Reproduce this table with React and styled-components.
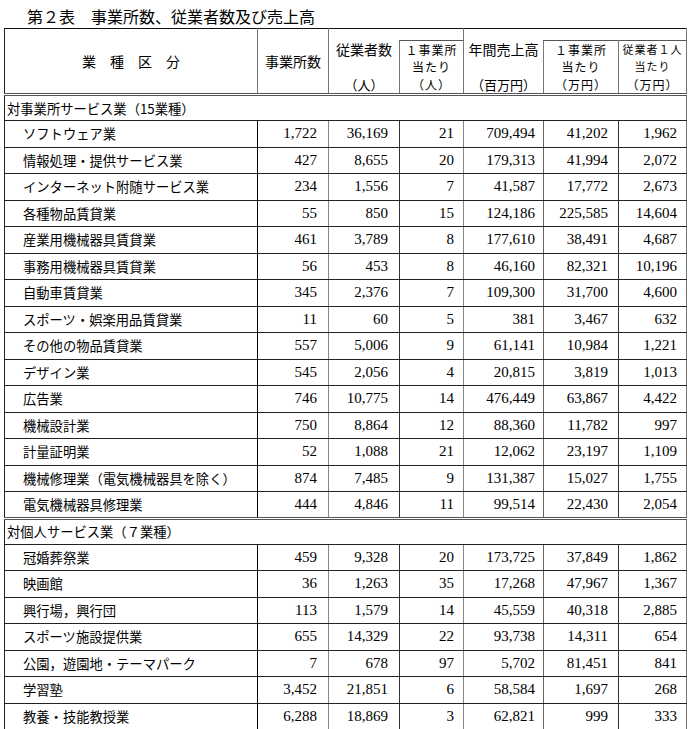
import styled, { createGlobalStyle } from "styled-components";

const GlobalStyle = createGlobalStyle`
  html, body {
    margin: 0;
    padding: 0;
    background: #ffffff;
  }
  body {
    font-family: "Noto Sans CJK JP", "Noto Sans", sans-serif;
    color: #000;
  }
`;

const Page = styled.div`
  width: 688px;
  padding-left: 4px;
  box-sizing: border-box;
`;

const Title = styled.h1`
  margin: 0;
  height: 28px;
  padding: 4px 0 0 23px;
  box-sizing: border-box;
  font-size: 16px;
  line-height: 24px;
  font-weight: 400;
  white-space: pre;
`;

const Table = styled.table`
  width: 682px;
  table-layout: fixed;
  border-collapse: collapse;
  border-top: 1px solid #111;
  border-left: 1px solid #222;
  border-right: 1px solid #777;
  border-bottom: 1px solid #222;
`;

const HeadRow = styled.tr`
  height: ${(p) => p.$h}px;
`;

const Th = styled.th`
  padding: 0;
  font-weight: 400;
  font-size: 14px;
  line-height: 17px;
  text-align: center;
  vertical-align: ${(p) => (p.$bottom ? "bottom" : "middle")};
  white-space: nowrap;
  overflow: hidden;
  border-left: 1px solid ${(p) => p.$left || "#777"};
  border-top: ${(p) => (p.$sub ? "1px solid #555" : "none")};
  border-right: ${(p) => (p.$openRight ? "none" : "1px solid #777")};
  border-bottom: 3px double #555;
`;

const GapCell = styled.th`
  padding: 0;
  border-left: none;
  border-top: none;
  border-right: 1px solid #777;
  border-bottom: none;
`;

const Line = styled.span`
  display: block;
  height: 17.4px;
  line-height: 17.4px;
  font-size: ${(p) => p.$size}px;
  letter-spacing: ${(p) => p.$track}px;
`;

const CategoryRow = styled.tr`
  height: 26px;
`;

const CategoryCell = styled.td`
  padding: 0 0 0 2px;
  font-size: 13.3px;
  text-align: left;
  vertical-align: middle;
  white-space: nowrap;
  border-bottom: 1px solid #222;
  border-top: ${(p) => (p.$double ? "3px double #555" : "none")};
`;

const DataRow = styled.tr`
  height: 26.5px;
`;

const LabelCell = styled.td`
  padding: 0 0 0 18px;
  font-size: 13.3px;
  white-space: nowrap;
  overflow: hidden;
  vertical-align: middle;
  border-bottom: 1px solid #222;
  border-right: 1px solid #000;
`;

const NumCell = styled.td`
  padding: 0 ${(p) => p.$pad}px 0 0;
  font-family: "Liberation Serif", "DejaVu Serif", serif;
  font-size: 15px;
  text-align: right;
  vertical-align: middle;
  white-space: nowrap;
  border-bottom: 1px solid #222;
  border-right: 1px solid ${(p) => p.$edge};
`;

const widths = [253, 71, 71, 64, 80, 75, 68];
const edges = ["#888", "#333", "#888", "#666", "#333", "#777"];
const pads = [11, 11, 9, 8, 10, 9];

const sections = [
  {
    title: "対事業所サービス業（15業種）",
    rows: [
      ["ソフトウェア業", "1,722", "36,169", "21", "709,494", "41,202", "1,962"],
      ["情報処理・提供サービス業", "427", "8,655", "20", "179,313", "41,994", "2,072"],
      ["インターネット附随サービス業", "234", "1,556", "7", "41,587", "17,772", "2,673"],
      ["各種物品賃貸業", "55", "850", "15", "124,186", "225,585", "14,604"],
      ["産業用機械器具賃貸業", "461", "3,789", "8", "177,610", "38,491", "4,687"],
      ["事務用機械器具賃貸業", "56", "453", "8", "46,160", "82,321", "10,196"],
      ["自動車賃貸業", "345", "2,376", "7", "109,300", "31,700", "4,600"],
      ["スポーツ・娯楽用品賃貸業", "11", "60", "5", "381", "3,467", "632"],
      ["その他の物品賃貸業", "557", "5,006", "9", "61,141", "10,984", "1,221"],
      ["デザイン業", "545", "2,056", "4", "20,815", "3,819", "1,013"],
      ["広告業", "746", "10,775", "14", "476,449", "63,867", "4,422"],
      ["機械設計業", "750", "8,864", "12", "88,360", "11,782", "997"],
      ["計量証明業", "52", "1,088", "21", "12,062", "23,197", "1,109"],
      ["機械修理業（電気機械器具を除く）", "874", "7,485", "9", "131,387", "15,027", "1,755"],
      ["電気機械器具修理業", "444", "4,846", "11", "99,514", "22,430", "2,054"],
    ],
  },
  {
    title: "対個人サービス業（７業種）",
    rows: [
      ["冠婚葬祭業", "459", "9,328", "20", "173,725", "37,849", "1,862"],
      ["映画館", "36", "1,263", "35", "17,268", "47,967", "1,367"],
      ["興行場，興行団", "113", "1,579", "14", "45,559", "40,318", "2,885"],
      ["スポーツ施設提供業", "655", "14,329", "22", "93,738", "14,311", "654"],
      ["公園，遊園地・テーマパーク", "7", "678", "97", "5,702", "81,451", "841"],
      ["学習塾", "3,452", "21,851", "6", "58,584", "1,697", "268"],
      ["教養・技能教授業", "6,288", "18,869", "3", "62,821", "999", "333"],
    ],
  },
];

// header text stacked in fixed-pitch lines; `sizes` is per line
function Lines({ items, sizes, track = 0 }) {
  return items.map((t, i) => (
    <Line key={i} $size={sizes[i]} $track={track}>
      {t}
    </Line>
  ));
}

export default function App() {
  return (
    <Page>
      <GlobalStyle />
      <Title>第２表　事業所数、従業者数及び売上高</Title>
      <Table>
        <colgroup>
          {widths.map((w, i) => (
            <col key={i} style={{ width: w }} />
          ))}
        </colgroup>
        <thead>
          <HeadRow $h={12}>
            <Th rowSpan={2} $left="#222">業　種　区　分</Th>
            <Th rowSpan={2} $left="#000">事業所数</Th>
            <Th rowSpan={2} $bottom $openRight>
              <Lines items={["従業者数", "", "（人）"]} sizes={[14, 12, 13]} />
            </Th>
            <GapCell />
            <Th rowSpan={2} $bottom $openRight>
              <Lines items={["年間売上高", "", "（百万円）"]} sizes={[14, 12, 13]} />
            </Th>
            <GapCell colSpan={2} />
          </HeadRow>
          <HeadRow $h={52}>
            <Th $sub $bottom>
              <Lines items={["１事業所", "当たり", "（人）"]} sizes={[12, 12, 12]} track={1} />
            </Th>
            <Th $sub $bottom>
              <Lines items={["１事業所", "当たり", "（万円）"]} sizes={[12, 12, 12]} track={1} />
            </Th>
            <Th $sub $bottom>
              <Lines items={["従業者１人", "当たり", "（万円）"]} sizes={[11, 11, 12]} track={1} />
            </Th>
          </HeadRow>
        </thead>
        <tbody>
          {sections.map((s, si) => [
            <CategoryRow key={`c${si}`}>
              <CategoryCell colSpan={7} $double={si > 0}>
                {s.title}
              </CategoryCell>
            </CategoryRow>,
            ...s.rows.map((r) => (
              <DataRow key={r[0]}>
                <LabelCell>{r[0]}</LabelCell>
                {r.slice(1).map((v, i) => (
                  <NumCell key={i} $edge={edges[i]} $pad={pads[i]}>
                    {v}
                  </NumCell>
                ))}
              </DataRow>
            )),
          ])}
        </tbody>
      </Table>
    </Page>
  );
}
